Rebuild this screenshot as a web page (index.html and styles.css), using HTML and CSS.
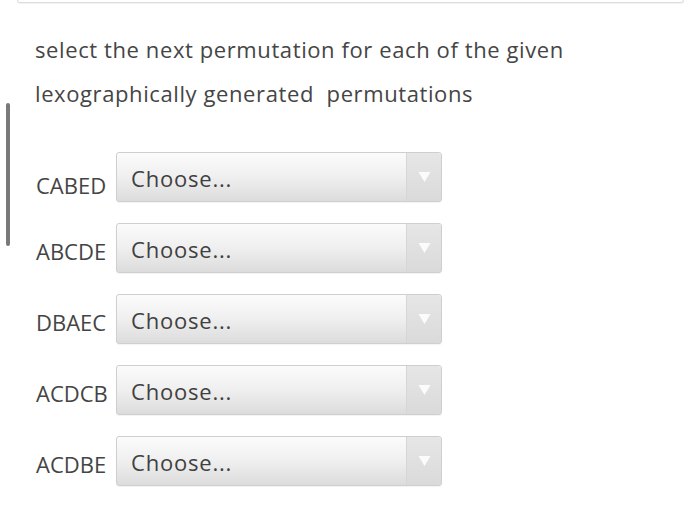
FILE: index.html
```html
<!DOCTYPE html>
<html>
<head>
<meta charset="utf-8">
<link rel="stylesheet" href="styles.css">
</head>
<body>
<div class="page">
  <div class="topcard"></div>
  <div class="scrollbar"></div>
  <div class="question">
    <p class="qtext">select the next permutation for each of the given<br>lexographically generated&nbsp; permutations</p>
    <div class="rows">
      <div class="row first"><span class="label">CABED</span><div class="select"><span class="value">Choose...</span><span class="arrow"><svg width="13" height="12" viewBox="0 0 13 12"><path d="M0.5 1 L12.5 1 L6.5 11 Z" fill="#fbfbfb"/></svg></span></div></div>
      <div class="row"><span class="label">ABCDE</span><div class="select"><span class="value">Choose...</span><span class="arrow"><svg width="13" height="12" viewBox="0 0 13 12"><path d="M0.5 1 L12.5 1 L6.5 11 Z" fill="#fbfbfb"/></svg></span></div></div>
      <div class="row"><span class="label">DBAEC</span><div class="select"><span class="value">Choose...</span><span class="arrow"><svg width="13" height="12" viewBox="0 0 13 12"><path d="M0.5 1 L12.5 1 L6.5 11 Z" fill="#fbfbfb"/></svg></span></div></div>
      <div class="row"><span class="label">ACDCB</span><div class="select"><span class="value">Choose...</span><span class="arrow"><svg width="13" height="12" viewBox="0 0 13 12"><path d="M0.5 1 L12.5 1 L6.5 11 Z" fill="#fbfbfb"/></svg></span></div></div>
      <div class="row"><span class="label">ACDBE</span><div class="select"><span class="value">Choose...</span><span class="arrow"><svg width="13" height="12" viewBox="0 0 13 12"><path d="M0.5 1 L12.5 1 L6.5 11 Z" fill="#fbfbfb"/></svg></span></div></div>
    </div>
  </div>
</div>
</body>
</html>
```
FILE: styles.css
```css
html, body {
  margin: 0;
  padding: 0;
  background: #fff;
}
body {
  font-family: "Open Sans", "Noto Sans", sans-serif;
  color: #444;
}
.page {
  position: relative;
  width: 700px;
  height: 522px;
  overflow: hidden;
}
.topcard {
  height: 2px;
  margin: 0 16px 0 17px;
  border: 1px solid #ddd;
  border-top: none;
  border-radius: 0 0 4px 4px;
  box-shadow: 0 1px 1px rgba(0,0,0,0.06);
}
.scrollbar {
  position: absolute;
  left: 6px;
  top: 103px;
  width: 4px;
  height: 143px;
  background: #7a7a7a;
  border-radius: 2px;
}
.question {
  padding: 0 0 0 35px;
}
.qtext {
  margin: 24px 0 0 0;
  font-size: 22px;
  line-height: 44px;
  color: #454545;
  letter-spacing: 0.6px;
}
.rows {
  display: flex;
  flex-direction: column;
  gap: 21px;
  margin-top: 37px;
}
.row {
  display: flex;
  align-items: center;
}
.label {
  width: 80px;
  margin-left: 1px;
  font-size: 22px;
  line-height: 26px;
  position: relative;
  top: 3px;
  color: #444;
}
.row.first .label {
  top: 8px;
}
.select {
  width: 324px;
  height: 48px;
  border: 1px solid #cfcfcf;
  border-radius: 3px;
  background: linear-gradient(to bottom, #fbfbfb 0%, #efefef 50%, #dcdcdc 100%);
  display: flex;
  box-shadow: 0 1px 1px rgba(0,0,0,0.05);
}
.value {
  flex: 1;
  padding: 12px 0 0 14px;
  font-size: 22px;
  line-height: 26px;
  color: #404040;
  letter-spacing: 0.8px;
}
.arrow {
  width: 34px;
  border-left: 1px solid #d6d6d6;
  background: linear-gradient(to bottom, #e6e6e6 0%, #dadada 100%);
  display: flex;
  justify-content: center;
  align-items: center;
  border-radius: 0 3px 3px 0;
}
```
